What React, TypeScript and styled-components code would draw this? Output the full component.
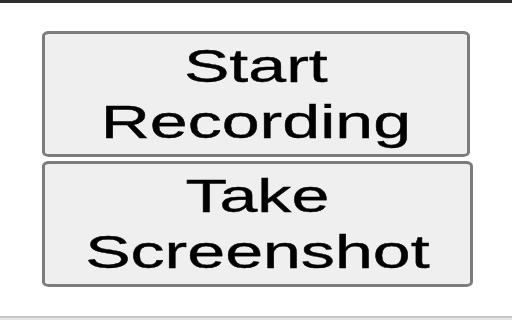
import styled, { createGlobalStyle } from 'styled-components';

const GlobalStyle = createGlobalStyle`
  html, body {
    margin: 0;
    padding: 0;
    background: #ffffff;
  }
`;

const App = () => {
  return (
    <>
      <GlobalStyle />
      <Page>
        <TopBar />
        <Main>
          <ActionButton>
            <Label>
              Start
              <br />
              Recording
            </Label>
          </ActionButton>
          <ActionButton $wide>
            <Label>
              Take
              <br />
              Screenshot
            </Label>
          </ActionButton>
        </Main>
        <Footer />
      </Page>
    </>
  );
};

const Page = styled.div`
  width: 512px;
  height: 320px;
  display: flex;
  flex-direction: column;
  overflow: hidden;
  background: #ffffff;
`;

const TopBar = styled.div`
  height: 3px;
  background: #2f2f2f;
  flex-shrink: 0;
`;

const Main = styled.div`
  flex: 1;
  display: flex;
  flex-direction: column;
  align-items: center;
  gap: 4px;
  padding-top: 28px;
`;

const ActionButton = styled.button<{ $wide?: boolean }>`
  box-sizing: border-box;
  width: ${({ $wide }) => ($wide ? '431px' : '428px')};
  margin-left: ${({ $wide }) => ($wide ? '2px' : '0')};
  height: 126px;
  padding: 4px 0;
  background: #efefef;
  border: 3px solid #7c7c7c;
  border-radius: 7px / 5px;
  display: flex;
  align-items: center;
  justify-content: center;
  cursor: pointer;
`;

const Label = styled.span`
  display: inline-block;
  font-family: 'Liberation Sans', Arial, sans-serif;
  font-size: 46px;
  line-height: 56px;
  color: #000000;
  text-align: center;
  transform: scaleX(1.48);
  white-space: nowrap;
  -webkit-text-stroke: 0.4px #000000;
`;

const Footer = styled.div`
  height: 2px;
  border-top: 2px solid #c6c6c6;
  background: #e6e6e6;
  flex-shrink: 0;
`;

export default App;
